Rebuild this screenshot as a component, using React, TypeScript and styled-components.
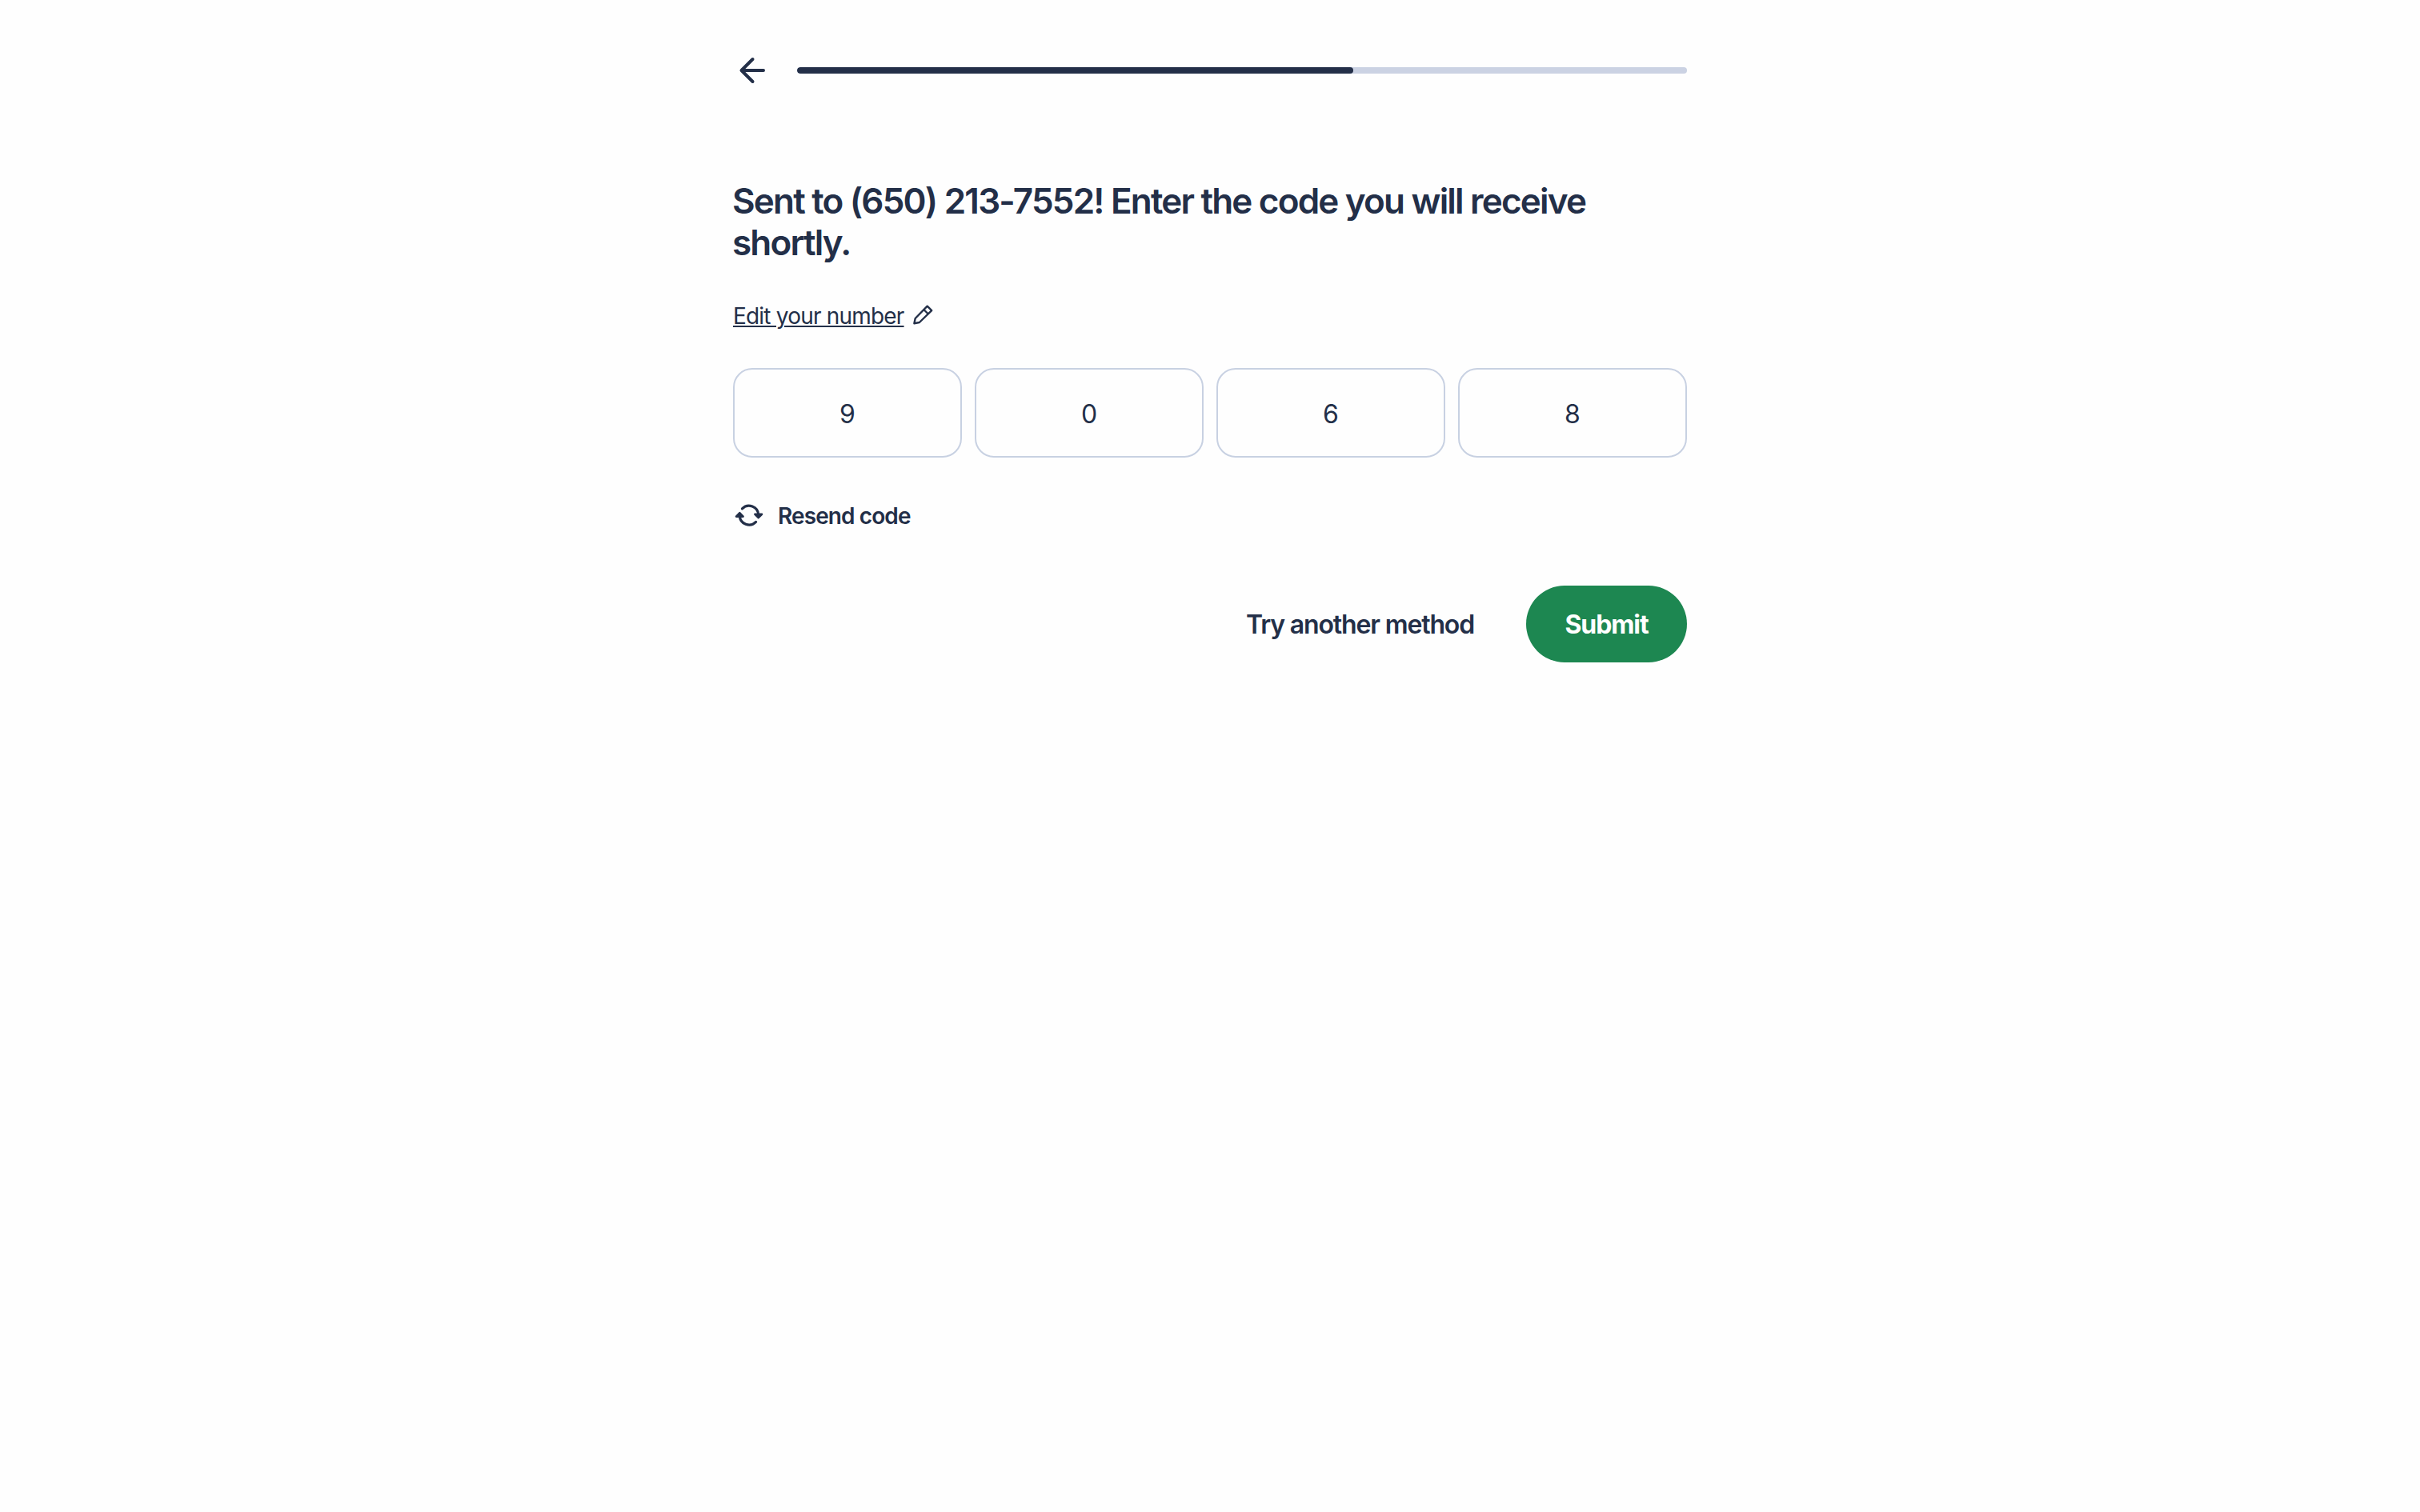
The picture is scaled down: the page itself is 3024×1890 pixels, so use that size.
import { useState } from 'react';
import styled, { createGlobalStyle } from 'styled-components';

const App = () => {
    const [code, setCode] = useState(['9', '0', '6', '8']);

    const updateDigit = (index: number, value: string) => {
        setCode(code.map((digit, i) => (i === index ? value.slice(-1) : digit)));
    }

    return (
        <>
            <GlobalStyle />
            <Page>
                <Header>
                    <BackButton aria-label="Back">
                        <ArrowIcon />
                    </BackButton>
                    <Track>
                        <Progress $percent={62.5} />
                    </Track>
                </Header>
                <Title>Sent to (650) 213-7552! Enter the code you will receive shortly.</Title>
                <EditLink href="#">
                    <EditText>Edit your number</EditText>
                    <PencilIcon />
                </EditLink>
                <CodeRow>
                    {code.map((digit, i) => (
                        <CodeInput
                            key={i}
                            inputMode="numeric"
                            value={digit}
                            onChange={(e) => updateDigit(i, e.target.value)}
                        />
                    ))}
                </CodeRow>
                <ResendButton>
                    <ResendIcon />
                    Resend code
                </ResendButton>
                <Actions>
                    <TextButton>Try another method</TextButton>
                    <SubmitButton>Submit</SubmitButton>
                </Actions>
            </Page>
        </>
    )
}

const ArrowIcon = () => (
    <svg width="48" height="48" viewBox="0 0 48 48" fill="none" stroke="currentColor" strokeWidth="4" strokeLinecap="round" strokeLinejoin="round">
        <path d="M38 24H11M24.5 10L10.5 24L24.5 38" />
    </svg>
)

const PencilIcon = () => (
    <svg width="25" height="28" viewBox="0 0 25 28" fill="none" stroke="currentColor" strokeWidth="2.4" strokeLinejoin="round">
        <path d="M1.4 23.2L2.7 17L17.7 1.7L23.2 7.2L7.9 22L1.4 23.2ZM13.4 6L18.9 11.5" />
    </svg>
)

const ResendIcon = () => (
    <svg width="40" height="40" viewBox="0 0 40 40" fill="none" stroke="currentColor" strokeWidth="3.2" strokeLinecap="round" strokeLinejoin="round">
        <path d="M11.4 10.8A11.8 11.8 0 0 1 31.7 18.6" />
        <path d="M28.6 27.4A11.8 11.8 0 0 1 8.3 19.6" />
        <path d="M27.4 17.8H36L31.7 22.2Z" fill="currentColor" strokeWidth="2.6" />
        <path d="M4 20.6H12.6L8.3 16.2Z" fill="currentColor" strokeWidth="2.6" />
    </svg>
)

const GlobalStyle = createGlobalStyle`
    * {
        box-sizing: border-box;
    }
    body {
        margin: 0;
        background: #fefefe;
        color: #232f48;
        font-family: Inter, "Liberation Sans", sans-serif;
    }
    button {
        padding: 0;
        border: none;
        background: none;
        color: inherit;
        font-family: inherit;
        cursor: pointer;
    }
`

const Page = styled.main`
    display: flex;
    flex-direction: column;
    align-items: flex-start;
    width: 1192px;
    margin: 0 auto;
    padding-top: 64px;
`

const Header = styled.header`
    display: flex;
    align-items: center;
    gap: 32px;
    width: 100%;
`

const BackButton = styled.button`
    width: 48px;
    height: 48px;
    line-height: 0;
`

const Track = styled.div`
    flex: 1;
    height: 8px;
    border-radius: 4px;
    background: #cbd2e3;
    overflow: hidden;
`

const Progress = styled.div<{ $percent: number }>`
    width: ${({ $percent }) => $percent}%;
    height: 100%;
    border-radius: 4px;
    background: #232f48;
`

const Title = styled.h1`
    margin: 113px 0 0 -1px;
    font-size: 44px;
    font-weight: 600;
    line-height: 52px;
    letter-spacing: -1.8px;
`

const EditLink = styled.a`
    display: flex;
    align-items: center;
    gap: 11px;
    height: 36px;
    margin-top: 48px;
    color: inherit;
    text-decoration: none;
`

const EditText = styled.span`
    font-size: 28px;
    line-height: 36px;
    letter-spacing: -0.8px;
    text-decoration: underline;
    text-decoration-thickness: 2px;
    text-underline-offset: 2px;
`

const CodeRow = styled.div`
    display: grid;
    grid-template-columns: repeat(4, 1fr);
    gap: 16px;
    width: 100%;
    margin-top: 47px;
`

const CodeInput = styled.input`
    width: 100%;
    height: 112px;
    padding: 2px 0 0;
    border: 2px solid #c8d1e2;
    border-radius: 24px;
    background: transparent;
    color: inherit;
    font-family: inherit;
    font-size: 32px;
    text-align: center;
    outline: none;
`

const ResendButton = styled.button`
    display: flex;
    align-items: center;
    gap: 16px;
    height: 40px;
    margin-top: 53px;
    font-size: 28px;
    font-weight: 600;
    letter-spacing: -0.9px;
`

const Actions = styled.div`
    display: flex;
    align-items: center;
    justify-content: flex-end;
    gap: 65px;
    width: 100%;
    margin-top: 67px;
`

const TextButton = styled.button`
    font-size: 32px;
    font-weight: 600;
    letter-spacing: -1.15px;
`

const SubmitButton = styled.button`
    width: 201px;
    height: 96px;
    border-radius: 48px;
    background: #1d8751;
    color: #fff;
    font-size: 32px;
    font-weight: 700;
    letter-spacing: -1.1px;
`

export default App;
